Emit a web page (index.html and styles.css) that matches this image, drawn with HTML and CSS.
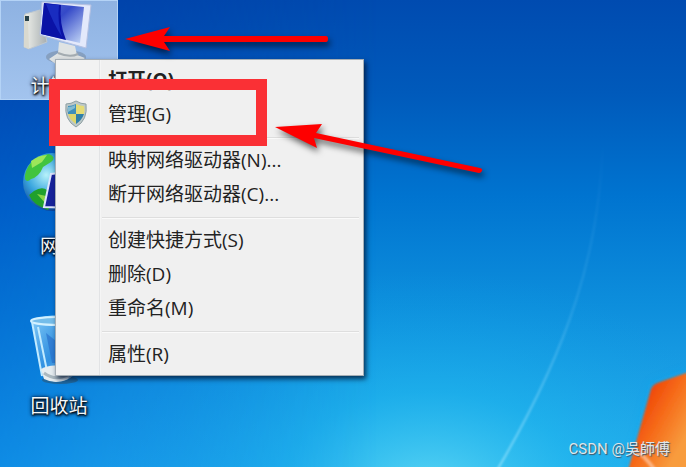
FILE: index.html
```html
<!DOCTYPE html>
<html lang="zh-CN">
<head>
<meta charset="utf-8">
<meta name="viewport" content="width=device-width, initial-scale=1">
<title>桌面</title>
<link rel="stylesheet" href="styles.css">
</head>
<body>
<main class="desktop">
  <svg class="wallpaper" viewBox="0 0 686 467" preserveAspectRatio="xMaxYMax slice" aria-hidden="true">
    <defs>
      <linearGradient id="sky" x1="0" y1="0" x2="0" y2="1">
        <stop offset="0" stop-color="#004bb0"/>
        <stop offset=".2" stop-color="#005abb"/>
        <stop offset=".42" stop-color="#0074d0"/>
        <stop offset=".65" stop-color="#0d8edc"/>
        <stop offset="1" stop-color="#2ab2ee"/>
      </linearGradient>
      <linearGradient id="depth" x1="0" y1="0" x2="0" y2="1">
        <stop offset="0" stop-color="#003aa4"/>
        <stop offset=".45" stop-color="#0052c4"/>
        <stop offset="1" stop-color="#0078e0"/>
      </linearGradient>
      <linearGradient id="fade" x1="0" y1="0" x2="1" y2="0">
        <stop offset="0" stop-color="#fff" stop-opacity=".65"/>
        <stop offset=".3" stop-color="#fff" stop-opacity=".3"/>
        <stop offset=".55" stop-color="#fff" stop-opacity="0"/>
      </linearGradient>
      <mask id="left"><rect width="686" height="467" fill="url(#fade)"/></mask>
      <radialGradient id="glow" gradientUnits="userSpaceOnUse" cx="0" cy="0" r="1" gradientTransform="translate(430 490) scale(330 220)">
        <stop offset="0" stop-color="#60d8f4" stop-opacity=".9"/>
        <stop offset=".45" stop-color="#1cb8ee" stop-opacity=".5"/>
        <stop offset="1" stop-color="#0a9ce4" stop-opacity="0"/>
      </radialGradient>
      <linearGradient id="streak" gradientUnits="userSpaceOnUse" x1="600" y1="140" x2="500" y2="467">
        <stop offset="0" stop-color="#8fd4ff" stop-opacity="0"/>
        <stop offset=".5" stop-color="#8fd8ff" stop-opacity=".2"/>
        <stop offset="1" stop-color="#a8eaff" stop-opacity=".65"/>
      </linearGradient>
      <linearGradient id="flag" gradientUnits="userSpaceOnUse" x1="645" y1="405" x2="690" y2="430">
        <stop offset="0" stop-color="#f04c0a"/>
        <stop offset=".4" stop-color="#f66c1a"/>
        <stop offset="1" stop-color="#f89c3e"/>
      </linearGradient>
      <filter id="soft"><feGaussianBlur stdDeviation="1"/></filter>
      <filter id="halo"><feGaussianBlur stdDeviation="5"/></filter>
    </defs>
    <rect width="686" height="467" fill="url(#sky)"/>
    <rect y="100" width="686" height="367" fill="url(#glow)"/>
    <rect width="686" height="467" fill="url(#depth)" mask="url(#left)"/>
    <path d="M603 130C602 250 568 350 496 472" fill="none" stroke="url(#streak)" stroke-width="2" filter="url(#soft)"/>
    <path d="M690 370L652 384 628 470h62z" fill="#12a6ee" opacity=".6" filter="url(#halo)"/>
    <path d="M692 371L660 382Q653 384 651 389L627 474h65z" fill="url(#flag)" filter="url(#soft)"/>
    <path d="M634 450Q645 455 656 472" fill="none" stroke="#ffc096" stroke-width="4" opacity=".8" filter="url(#soft)"/>
  </svg>

  <nav class="icons" aria-label="桌面图标">
    <button class="icon icon-selected" type="button">
      <svg class="icon-art" viewBox="0 0 80 70" aria-hidden="true">
        <defs>
          <linearGradient id="screen" x1="0" y1="0" x2="1" y2="1">
            <stop offset="0" stop-color="#5268d2"/><stop offset=".4" stop-color="#3449c8"/><stop offset="1" stop-color="#c8dcf8"/>
          </linearGradient>
          <linearGradient id="case" x1="0" y1="0" x2="1" y2="0">
            <stop offset="0" stop-color="#f1f2ec"/><stop offset="1" stop-color="#a7aeb1"/>
          </linearGradient>
        </defs>
        <ellipse cx="47" cy="57" rx="20" ry="7" fill="#76899f" opacity=".55"/>
        <path d="M6 14l15-4 7 32-18 7-5-2z" fill="url(#case)" stroke="#bfc8cf"/>
        <path d="M5 15l4 1 1 33-5-2z" fill="#d9d9cf"/><path d="M6 16h4v5H6z" fill="#29424a"/>
        <path d="M40 42l16 4 2 9 8 3-8 7H38l-8-6 9-6z" fill="#dfe3e3"/>
        <path d="M39 53q12 5 20 1" fill="none" stroke="#a4acb1" stroke-width="2"/>
        <path d="M23 2l49 3-5 43-46-13z" fill="#e3e9fb" stroke="#b5c1e2"/>
        <path d="M25 3l40 4-4 36-39-9z" fill="url(#screen)"/>
        <path d="M25 3l17 2q-2 18 5 35l-25-6z" fill="#0a12a6"/>
        <path d="M27 4l13 1q-2 16 3 32-9-14-16-33z" fill="#2037cc" opacity=".7"/>
      </svg>
      <span class="icon-label">计算机</span>
    </button>
    <button class="icon" type="button">
      <svg class="icon-art" viewBox="0 0 80 70" aria-hidden="true">
        <defs>
          <radialGradient id="globe" cx=".4" cy=".38" r=".65">
            <stop offset="0" stop-color="#b6f2fa"/><stop offset=".5" stop-color="#3aa6df"/><stop offset="1" stop-color="#093b92"/>
          </radialGradient>
        </defs>
        <circle cx="33" cy="22" r="29" fill="url(#globe)"/>
        <path d="M6 15Q10-3 30-6q8 3 2 8l-8 5q-4 10-12 12-4 4-6 0z" fill="#42c43e"/>
        <path d="M12 1Q20-5 28-5l-5 7-10 6z" fill="#9de65a"/>
        <path d="M15 31q8-5 13-1l8 8-7 12Q14 45 10 35z" fill="#20a02c"/>
        <path d="M18 34l9 2 1 9z" fill="#8bd748"/>
        <path d="M32 14l24-3v37l-31-1z" fill="#17239b" stroke="#dce5fc" stroke-width="2"/>
      </svg>
      <span class="icon-label">网络</span>
    </button>
    <button class="icon" type="button">
      <svg class="icon-art" viewBox="0 0 80 70" aria-hidden="true">
        <defs>
          <linearGradient id="glass" x1="0" y1="0" x2="1" y2="1">
            <stop offset="0" stop-color="#9bdcff" stop-opacity=".9"/><stop offset=".5" stop-color="#4b9ee6" stop-opacity=".6"/><stop offset="1" stop-color="#e2f6ff"/>
          </linearGradient>
        </defs>
        <ellipse cx="41" cy="60" rx="18" ry="4" fill="#285d83" opacity=".7"/>
        <path d="M13 0l10 56q17 12 32-1L66 0q-25-10-53 0z" fill="url(#glass)"/>
        <ellipse cx="39" cy="1" rx="27" ry="4" fill="#75bdea" stroke="#d3f1ff" stroke-width="2"/>
        <path d="M13 2l10 54M19 7l9 44" fill="none" stroke="#c2ebff" stroke-width="2"/>
        <path d="M27 13l10 8 9-4v26H33z" fill="#286fcb" opacity=".65"/>
        <path d="M22 49q12-7 31 0l-4 10q-12 6-24 0z" fill="#e6edf0"/>
        <path d="M25 53q12 9 25 1" fill="none" stroke="#abb9c0" stroke-width="3"/>
      </svg>
      <span class="icon-label">回收站</span>
    </button>
  </nav>

  <div class="menu" role="menu" aria-label="计算机">
    <button class="item item-default" type="button" role="menuitem">打开(O)</button>
    <button class="item" type="button" role="menuitem">
      <svg class="shield" viewBox="0 0 24 28" aria-hidden="true">
        <path d="M12 1q5 3 10 3 2 16-10 23Q0 20 2 4q5 0 10-3z" fill="#bdc8c8" stroke="#8fa0a4"/>
        <path d="M12 4v10H4Q3 10 4 6q4 0 8-2z" fill="#3e8fba"/>
        <path d="M12 4q4 2 8 2 1 4 0 8h-8z" fill="#e5dc76"/>
        <path d="M4 14h8v10q-6-4-8-10z" fill="#ddd66c"/>
        <path d="M20 14h-8v10q6-4 8-10z" fill="#2f7fa8"/>
        <path d="M4 7q4 0 7-2v3l-7 4z" fill="#bde0e4" opacity=".55"/>
      </svg>
      管理(G)
    </button>
    <hr class="rule">
    <button class="item" type="button" role="menuitem">映射网络驱动器(N)...</button>
    <button class="item" type="button" role="menuitem">断开网络驱动器(C)...</button>
    <hr class="rule">
    <button class="item" type="button" role="menuitem">创建快捷方式(S)</button>
    <button class="item" type="button" role="menuitem">删除(D)</button>
    <button class="item" type="button" role="menuitem">重命名(M)</button>
    <hr class="rule">
    <button class="item" type="button" role="menuitem">属性(R)</button>
  </div>

  <div class="highlight"></div>
  <svg class="arrows" viewBox="0 0 500 200" aria-hidden="true">
    <g fill="#fe0000">
      <path d="M125 39L170 27 164 36H326Q328 36 328 39T326 42H164L170 51z"/>
      <path d="M275 127L322 124 316 133 480 168Q483 169 482 171T479 173L314 138 317 148z"/>
    </g>
  </svg>
  <p class="watermark">CSDN @吳師傅</p>
</main>
</body>
</html>
```
FILE: styles.css
```css
* {
  box-sizing: border-box;
}

body {
  margin: 0;
  font-family: "Open Sans", "Noto Sans CJK SC", sans-serif;
  font-size: 19px;
  line-height: 24px;
}

button {
  border: 0;
  padding: 0;
  background: none;
  font: inherit;
}

.desktop {
  position: relative;
  min-height: 100vh;
  overflow: hidden;
  background: #0070cf;
}

.wallpaper {
  position: absolute;
  inset: 0;
  width: 100%;
  height: 100%;
}

.icons {
  position: relative;
  display: flex;
  flex-direction: column;
  align-items: flex-start;
  gap: 60px;
}

.icon {
  display: flex;
  flex-direction: column;
  align-items: center;
  gap: 4px;
  width: 118px;
  height: 100px;
}

.icon-selected {
  background: linear-gradient(#8eb2e2, #a3c4ee);
  box-shadow: inset 0 0 0 1px #b4d3f6;
}

.icon-art {
  width: 80px;
  height: 70px;
  overflow: visible;
}

.icon-label {
  color: #f4f8fb;
  text-shadow: 0 1px 2px #000, 1px 1px 3px #000, 0 0 4px #002;
}

.menu {
  position: absolute;
  top: 59px;
  left: 55px;
  width: 309px;
  padding: 3px 2px 4px;
  border: 1px solid #a5aeb5;
  background: linear-gradient(90deg, #f2f2f2 43px, #e2e3e5 43px, #e2e3e5 44px, #fafafa 44px, #f0f0f0 45px);
  box-shadow: 2px 3px 5px rgba(0, 20, 50, .8);
}

.item {
  position: relative;
  display: block;
  width: 100%;
  height: 34px;
  padding-left: 50px;
  color: #222;
  text-align: left;
}

.item-default {
  font-weight: 700;
}

.shield {
  position: absolute;
  top: 3px;
  left: 6px;
  width: 24px;
  height: 28px;
}

.rule {
  height: 2px;
  margin: 6px 2px 4px 44px;
  border: 0;
  border-top: 1px solid #dedede;
  background: #fafafa;
}

.highlight {
  position: absolute;
  top: 79px;
  left: 49px;
  width: 218px;
  height: 67px;
  border: 11px solid #fa3035;
}

.arrows {
  position: absolute;
  top: 0;
  left: 0;
  width: 500px;
  height: 200px;
  filter: drop-shadow(2px 4px 3px rgba(0, 0, 0, .6));
  pointer-events: none;
}

.watermark {
  position: absolute;
  right: 16px;
  bottom: 6px;
  margin: 0;
  color: #dde6ec;
  font-family: Roboto, "Noto Sans CJK TC", sans-serif;
  font-size: 15px;
  text-shadow: 1px 1px 1px #456;
}
```
